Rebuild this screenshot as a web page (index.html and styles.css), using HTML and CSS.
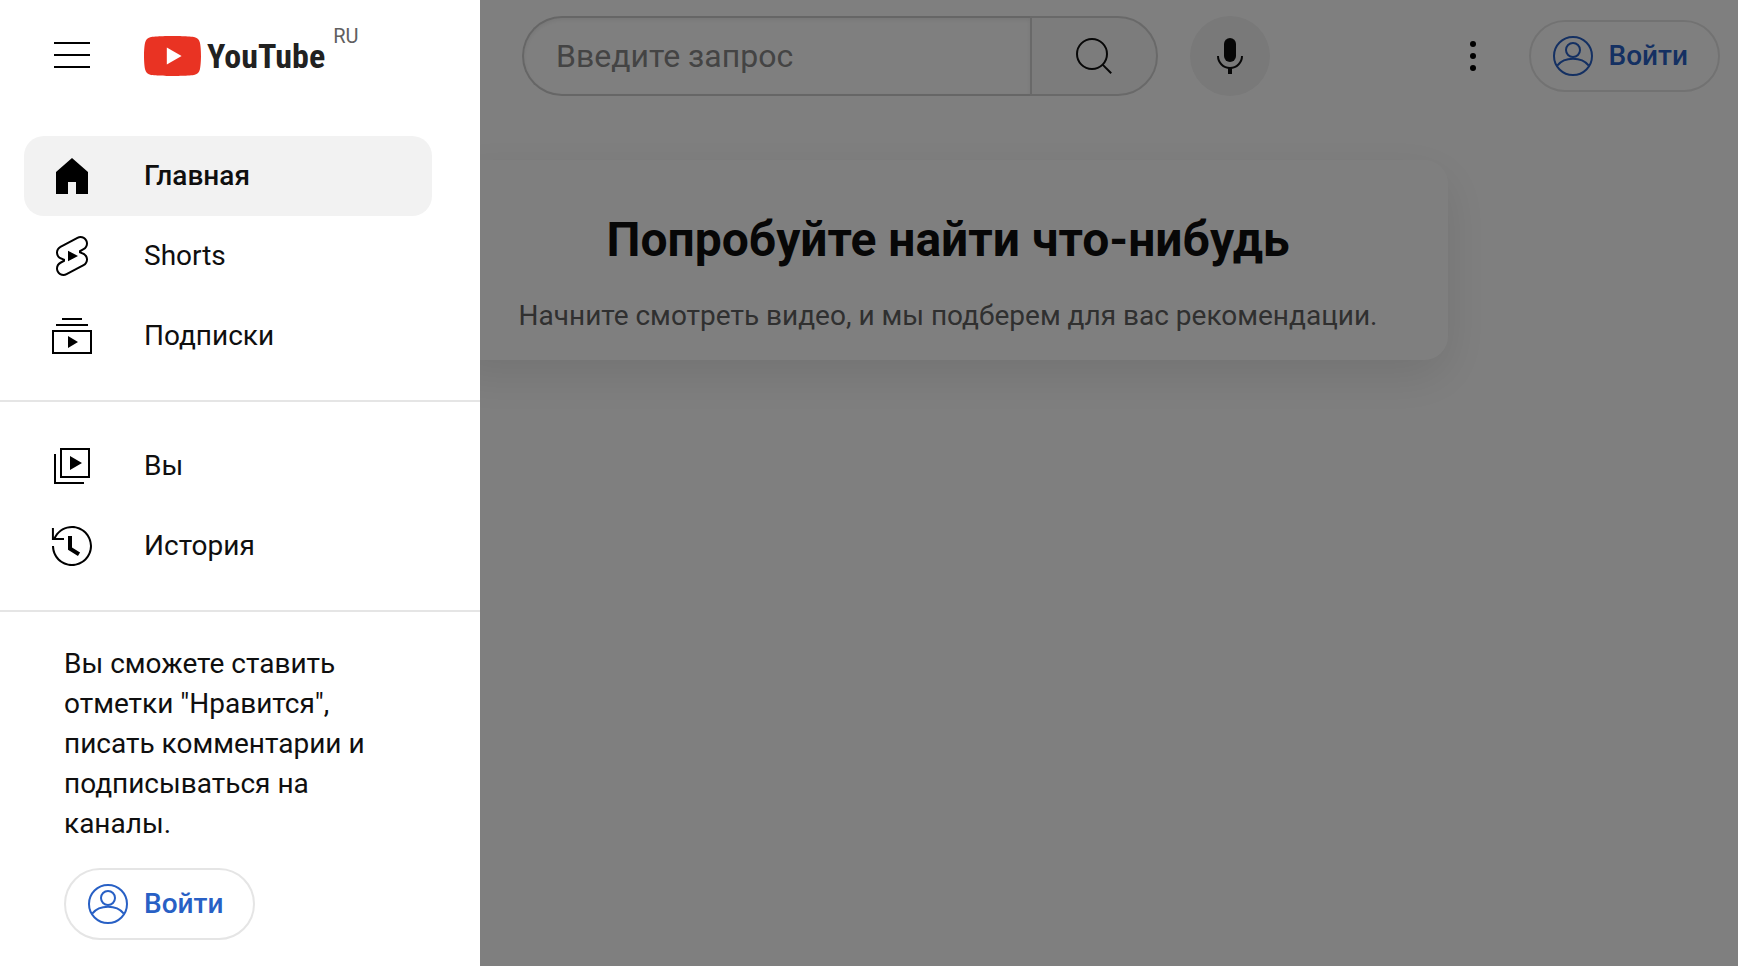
FILE: index.html
```html
<!DOCTYPE html>
<html lang="ru">
<head>
    <meta charset="UTF-8">
    <meta name="viewport" content="width=device-width, initial-scale=1.0">
    <title>YouTube</title>
    <link rel="stylesheet" href="styles.css">
</head>
<body>
    <!-- Header -->
    <header class="masthead">
        <form class="search" role="search">
            <input class="search-input" type="text" placeholder="Введите запрос" aria-label="Введите запрос">
            <button class="search-button" type="button" aria-label="Поиск">
                <svg class="icon" viewBox="0 0 24 24"><g fill="none" stroke="currentColor"><circle cx="11" cy="11" r="7.5"/><path d="M16.3 16.3l4.3 4.3"/></g></svg>
            </button>
        </form>
        <button class="mic-button" type="button" aria-label="Голосовой поиск">
            <svg class="icon" viewBox="0 0 24 24"><rect x="9" y="3" width="6" height="12" rx="3"/><path d="M6 12a6 6 0 0 0 12 0" fill="none" stroke="currentColor"/><path d="M11 18h2v3h-2z"/></svg>
        </button>
        <div class="masthead-end">
            <button class="settings-button" type="button" aria-label="Настройки">
                <svg class="icon" viewBox="0 0 24 24"><circle cx="12" cy="6" r="1.5"/><circle cx="12" cy="12" r="1.5"/><circle cx="12" cy="18" r="1.5"/></svg>
            </button>
            <a class="sign-in" href="#">
                <svg class="icon" viewBox="0 0 24 24"><g fill="none" stroke="currentColor"><circle cx="12" cy="12" r="9.5"/><circle cx="12" cy="9" r="3.5"/><path d="M4.1 16.8C5.9 14.6 8.5 13.4 12 13.4s6.1 1.2 7.9 3.4"/></g></svg>
                Войти
            </a>
        </div>
    </header>

    <!-- Feed -->
    <main class="feed">
        <section class="nudge">
            <h1>Попробуйте найти что-нибудь</h1>
            <p>Начните смотреть видео, и мы подберем для вас рекомендации.</p>
        </section>
    </main>

    <div class="scrim"></div>

    <!-- Guide drawer -->
    <aside class="drawer">
        <div class="drawer-header">
            <button class="menu-button" type="button" aria-label="Меню">
                <svg class="icon" viewBox="0 0 24 24"><path d="M21 6H3V5h18v1zm0 5H3v1h18v-1zm0 6H3v1h18v-1z"/></svg>
            </button>
            <a class="logo" href="#" aria-label="YouTube">
                <svg class="logo-mark" viewBox="0 0 57 40">
                    <path fill="#e93323" d="M55.8 6.25A7.15 7.15 0 0 0 50.8 1.2C46.4 0 28.5 0 28.5 0S10.7 0 6.2 1.2A7.15 7.15 0 0 0 1.2 6.25C0 10.7 0 20 0 20s0 9.3 1.2 13.75a7.15 7.15 0 0 0 5 5.05C10.7 40 28.5 40 28.5 40s17.9 0 22.3-1.2a7.15 7.15 0 0 0 5-5.05C57 29.3 57 20 57 20s0-9.3-1.2-13.75z"/>
                    <path fill="#fff" d="M22.8 28.6L37.6 20 22.8 11.4z"/>
                </svg>
                <span class="logo-text">YouTube</span>
            </a>
            <span class="country">RU</span>
        </div>

        <nav class="guide-section">
            <a class="guide-item active" href="#">
                <svg class="icon" viewBox="0 0 24 24"><path d="M4 10v11h6v-6h4v6h6V10l-8-7z"/></svg>
                Главная
            </a>
            <a class="guide-item" href="#">
                <svg class="icon" viewBox="0 0 24 24"><path d="M10 14.65v-5.3L15 12l-5 2.65zm7.77-4.33-1.2-.5L18 9.06c1.84-.96 2.53-3.23 1.56-5.06s-3.24-2.53-5.07-1.56L6 6.94c-1.29.68-2.07 2.04-2 3.49.07 1.42.93 2.67 2.22 3.25.03.01 1.2.5 1.2.5L6 14.93c-1.83.97-2.53 3.24-1.56 5.07.97 1.83 3.24 2.53 5.07 1.56l8.5-4.5c1.29-.68 2.06-2.04 1.99-3.49-.07-1.42-.94-2.68-2.23-3.25zm-.23 5.86-8.5 4.5c-1.34.71-3.01.2-3.72-1.14-.71-1.34-.2-3.01 1.14-3.72l2.04-1.08v-1.21l-.69-.28-1.11-.46c-.99-.41-1.65-1.35-1.7-2.41-.05-1.06.52-2.06 1.46-2.56l8.5-4.5c1.34-.71 3.01-.2 3.72 1.14.71 1.34.2 3.01-1.14 3.72L15.5 9.26v1.21l1.8.74c.99.41 1.65 1.35 1.7 2.41.05 1.06-.52 2.06-1.46 2.56z"/></svg>
                Shorts
            </a>
            <a class="guide-item" href="#">
                <svg class="icon" viewBox="0 0 24 24"><path d="M10 18v-6l5 3-5 3zm7-15H7v1h10V3zm3 3H4v1h16V6zm2 3H2v12h20V9zM3 10h18v10H3V10z"/></svg>
                Подписки
            </a>
        </nav>

        <nav class="guide-section">
            <a class="guide-item" href="#">
                <svg class="icon" viewBox="0 0 24 24"><path d="m11 7 6 3.5-6 3.5V7zm7 13H4V6H3v15h15v-1zm3-2H6V3h15v15zM7 17h13V4H7v13z"/></svg>
                Вы
            </a>
            <a class="guide-item" href="#">
                <svg class="icon" viewBox="0 0 24 24"><path d="M14.97 16.95 10 13.87V7h2v5.76l4.03 2.49-1.06 1.7zM22 12c0 5.51-4.49 10-10 10S2 17.51 2 12h1c0 4.96 4.04 9 9 9s9-4.04 9-9-4.04-9-9-9C8.81 3 5.92 4.64 4.28 7.38c-.11.18-.22.37-.31.56L3.94 8H8v1H1.96V3h1v4.74c.04-.09.07-.17.11-.25.11-.22.23-.42.35-.63C5.22 3.86 8.51 2 12 2c5.51 0 10 4.49 10 10z"/></svg>
                История
            </a>
        </nav>

        <div class="promo">
            <p>Вы сможете ставить отметки "Нравится", писать комментарии и подписываться на каналы.</p>
            <a class="sign-in" href="#">
                <svg class="icon" viewBox="0 0 24 24"><g fill="none" stroke="currentColor"><circle cx="12" cy="12" r="9.5"/><circle cx="12" cy="9" r="3.5"/><path d="M4.1 16.8C5.9 14.6 8.5 13.4 12 13.4s6.1 1.2 7.9 3.4"/></g></svg>
                Войти
            </a>
        </div>
    </aside>
</body>
</html>
```
FILE: styles.css
```css
/* General Styles */
* {
    box-sizing: border-box;
}

body {
    font-family: Roboto, Arial, sans-serif;
    font-size: 28px;
    line-height: 40px;
    min-height: 100vh;
    margin: 0;
    background-color: #fff;
    color: #0f0f0f;
}

a {
    color: inherit;
    text-decoration: none;
}

button {
    display: flex;
    align-items: center;
    justify-content: center;
    padding: 0;
    border: none;
    background: none;
    color: #0f0f0f;
    cursor: pointer;
}

.icon {
    flex: none;
    display: block;
    width: 48px;
    height: 48px;
    fill: currentColor;
}

/* Header Styles */
.masthead {
    display: flex;
    align-items: center;
    height: 112px;
    padding: 0 18px 0 522px;
}

.search {
    display: flex;
    flex: 1;
    max-width: 636px;
    height: 80px;
}

.search-input {
    flex: 1;
    min-width: 0;
    padding: 0 32px;
    border: 2px solid #ccc;
    border-right: none;
    border-radius: 40px 0 0 40px;
    box-shadow: inset 0 2px 4px #eee;
    background-color: #fff;
    font-family: inherit;
    font-size: 32px;
}

.search-input::placeholder {
    color: #888;
}

.search-button {
    width: 128px;
    border: 2px solid #d3d3d3;
    border-radius: 0 40px 40px 0;
    background-color: #f8f8f8;
}

.mic-button {
    flex: none;
    width: 80px;
    height: 80px;
    margin-left: 32px;
    border-radius: 50%;
    background-color: #f2f2f2;
}

.masthead-end {
    display: flex;
    align-items: center;
    gap: 16px;
    margin-left: auto;
}

.settings-button {
    width: 80px;
    height: 80px;
    color: #000;
}

.sign-in {
    display: inline-flex;
    align-items: center;
    gap: 12px;
    height: 72px;
    padding: 0 30px 0 18px;
    border: 2px solid #e5e5e5;
    border-radius: 36px;
    color: #2860c5;
    font-weight: 500;
}

/* Feed Styles */
.feed {
    padding: 48px 0 80px 158px;
}

.nudge {
    max-width: 1000px;
    margin: 0 auto;
    padding: 48px 32px 24px;
    border-radius: 24px;
    background-color: #fff;
    box-shadow: 0 16px 48px rgba(0, 0, 0, 0.1);
    text-align: center;
}

.nudge h1 {
    margin: 0 0 24px;
    font-size: 48px;
    line-height: 64px;
    font-weight: 700;
}

.nudge p {
    margin: 0;
    color: #606060;
}

/* Drawer Styles */
.scrim {
    position: fixed;
    inset: 0;
    background-color: rgba(0, 0, 0, 0.5);
}

.drawer {
    position: fixed;
    top: 0;
    bottom: 0;
    left: 0;
    width: 480px;
    overflow: hidden;
    background-color: #fff;
}

.drawer-header {
    display: flex;
    align-items: center;
    height: 112px;
    padding-left: 48px;
}

.menu-button {
    margin-right: 48px;
    color: #000;
}

.logo {
    display: flex;
    align-items: center;
    gap: 6px;
}

.logo-mark {
    width: 57px;
    height: 40px;
}

.logo-text {
    color: #212121;
    font-family: "Roboto Condensed", "Liberation Sans Narrow", Roboto, sans-serif;
    font-size: 34px;
    font-weight: 700;
}

.country {
    align-self: flex-start;
    margin: 16px 0 0 8px;
    color: #606060;
    font-size: 20px;
}

.guide-section {
    padding: 24px 48px 24px 24px;
    border-bottom: 2px solid #e5e5e5;
}

.guide-item {
    display: flex;
    align-items: center;
    gap: 48px;
    height: 80px;
    padding: 0 24px;
    border-radius: 20px;
}

.guide-item .icon {
    color: #000;
}

.guide-item.active {
    background-color: #f2f2f2;
    font-weight: 500;
}

.promo {
    padding: 32px 64px;
}

.promo p {
    max-width: 320px;
    margin: 0 0 24px;
}
```
